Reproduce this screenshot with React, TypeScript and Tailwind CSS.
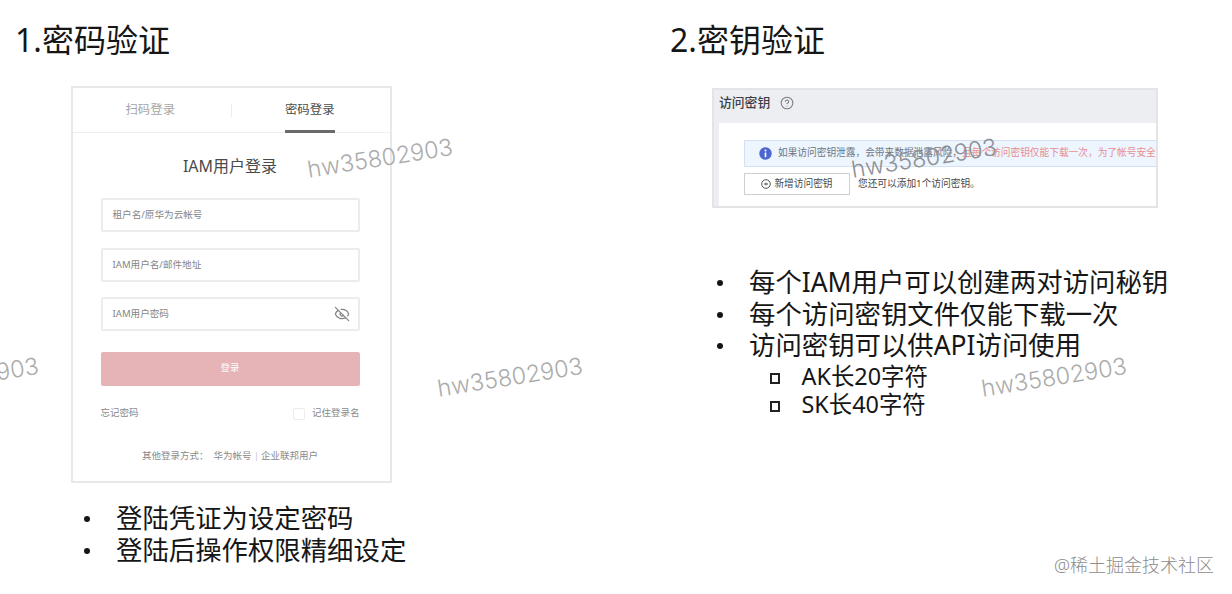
import React from 'react';
import { CircleHelp, EyeOff } from 'lucide-react';

const watermarks = [
  { id: 'a', position: 'left-[380px] top-[157.5px]', color: 'text-[#acacac]' },
  { id: 'b', position: 'left-[924px] top-[157.5px]', color: 'text-[#8d9196]' },
  { id: 'c', position: 'left-[-34px] top-[376.5px]', color: 'text-[#acacac]' },
  { id: 'd', position: 'left-[510px] top-[376.5px]', color: 'text-[#acacac]' },
  { id: 'e', position: 'left-[1054px] top-[376.5px]', color: 'text-[#acacac]' },
];

const passwordNotes = ['登陆凭证为设定密码', '登陆后操作权限精细设定'];
const keyNotes = ['每个IAM用户可以创建两对访问秘钥', '每个访问密钥文件仅能下载一次', '访问密钥可以供API访问使用'];
const keyLengths = ['AK长20字符', 'SK长40字符'];

const BulletList: React.FC<{ items: string[] }> = ({ items }) => (
  <ul className="text-[26.4px] leading-[31.7px] text-[#161616]">
    {items.map((item) => (
      <li key={item} className="flex items-center whitespace-nowrap">
        <span className="w-[6px] h-[6px] rounded-full bg-[#161616] mr-[26px]"></span>
        <span>{item}</span>
      </li>
    ))}
  </ul>
);

const Field: React.FC<{ placeholder: string; children?: React.ReactNode }> = ({ placeholder, children }) => (
  <div className="flex items-center justify-between h-[34px] mb-[15.5px] pl-[10px] pr-[8px] border-2 border-[#ececec] rounded-xs">
    <span className="pt-px text-[9.6px] text-[#858585]">{placeholder}</span>
    {children}
  </div>
);

const LoginCard: React.FC = () => (
  <div className="w-[321px] h-[397px] border-2 border-[#e8e8e8] bg-white">
    <div className="flex items-center h-[45px] border-b border-[#efefef] text-[12.4px]">
      <div className="flex-1 pr-[3px] text-center text-[#a6a6a6]">扫码登录</div>
      <div className="w-px h-[13px] bg-[#ececec]"></div>
      <div className="flex-1 flex justify-center h-[45px] pr-[2px]">
        <span className="flex items-center h-[45px] pt-[3px] border-b-3 border-[#6a6a6a] text-[#4c4c4c]">密码登录</span>
      </div>
    </div>
    <div className="pl-[28px] pr-[30px]">
      <h2 className="h-[65px] pt-[21px] leading-[24px] text-center text-[16px] text-[#4a4a4a]">IAM用户登录</h2>
      <Field placeholder="租户名/原华为云帐号" />
      <Field placeholder="IAM用户名/邮件地址" />
      <Field placeholder="IAM用户密码">
        <EyeOff className="w-[16px] h-[16px] text-[#858585]" strokeWidth={1.9} />
      </Field>
      <button className="block w-full h-[34px] mt-[20.5px] bg-[#e6b3b6] text-white text-[9.5px] rounded-xs">登录</button>
      <div className="flex items-center justify-between h-[20px] mt-[18px] text-[9.5px] text-[#8a8a8a]">
        <span>忘记密码</span>
        <span className="flex items-center gap-[7px]">
          <span className="w-[12px] h-[12px] border border-[#ececec] rounded-xs"></span>
          记住登录名
        </span>
      </div>
      <div className="mt-[22px] leading-[20px] text-center text-[9.5px] text-[#8a8a8a] whitespace-nowrap">
        其他登录方式：<span className="ml-[5px]">华为帐号</span>
        <span className="mx-[2px] text-[#c8c8c8]">|</span>
        <span>企业联邦用户</span>
      </div>
    </div>
  </div>
);

const AccessKeyPanel: React.FC = () => (
  <div className="w-[446px] h-[120px] border-2 border-[#e4e4e6] bg-[#edeef2] pl-[5px] overflow-hidden">
    <div className="flex items-center h-[33px] pb-[7px] text-[12.8px] font-medium text-[#3c3d45]">
      <span>访问密钥</span>
      <CircleHelp className="ml-[10px] w-[14px] h-[14px] text-[#7b7c83]" strokeWidth={1.8} />
    </div>
    <div className="h-[83px] pt-[17px] pl-[25px] bg-white">
      <div className="flex items-center h-[27px] pl-[14px] border-y border-l border-[#d3e1f2] bg-[#edf5fe] text-[9.7px] whitespace-nowrap">
        <svg className="w-[13px] h-[13px] mr-[6px] shrink-0" viewBox="0 0 13 13">
          <circle cx="6.5" cy="6.5" r="6.2" fill="#4e66cf" />
          <circle cx="6.5" cy="3.5" r="1" fill="white" />
          <path d="M6.5 5.5v4.7" stroke="white" strokeWidth="1.6" />
        </svg>
        <span className="text-[#6d7682]">如果访问密钥泄露，会带来数据泄露风险，</span>
        <span className="text-[#e88d90]">且每个访问密钥仅能下载一次，为了帐号安全</span>
      </div>
      <div className="flex items-center mt-[6px] text-[9.7px] text-[#4a4a4a]">
        <button className="flex items-center justify-center w-[106px] h-[22px] border border-[#cfcfcf]">
          <svg className="w-[10px] h-[10px] mr-[3px]" viewBox="0 0 10 10" fill="none" stroke="#555">
            <circle cx="5" cy="5" r="4.3" />
            <path d="M3 5h4M5 3.8v2.4" />
          </svg>
          新增访问密钥
        </button>
        <span className="ml-[8px]">您还可以添加1个访问密钥。</span>
      </div>
    </div>
  </div>
);

const App: React.FC = () => {
  return (
    <div className="relative flex w-[1232px] h-[594px] overflow-hidden bg-white font-['Noto_Sans','Noto_Sans_CJK_SC',sans-serif]">
      <section className="w-[655px] pt-[20px] pl-[15px]">
        <h1 className="text-[32px] leading-[40px] text-[#161616]">1.密码验证</h1>
        <div className="mt-[26px] ml-[55.5px]">
          <LoginCard />
        </div>
        <div className="mt-[20px] ml-[69px]">
          <BulletList items={passwordNotes} />
        </div>
      </section>

      <section className="flex flex-col flex-1 pt-[20px] pl-[15px]">
        <h1 className="text-[32px] leading-[40px] text-[#161616]">2.密钥验证</h1>
        <div className="mt-[28px] ml-[42px]">
          <AccessKeyPanel />
        </div>
        <div className="mt-[59px] ml-[47px]">
          <BulletList items={keyNotes} />
          <ul className="ml-[52.5px] text-[23.4px] leading-[28.3px] text-[#161616]">
            {keyLengths.map((item) => (
              <li key={item} className="flex items-center h-[28.3px] pb-px">
                <span className="w-[10px] h-[11px] mt-[5px] mr-[22px] border-2 border-[#222]"></span>
                <span>{item}</span>
              </li>
            ))}
          </ul>
        </div>
        <div className="mt-auto mb-[16px] pr-[18px] text-right text-[18px] leading-[26px] font-light text-[#8c8c8c]">@稀土掘金技术社区</div>
      </section>

      {/* Diagonal user id stamps over the slide */}
      {watermarks.map((mark) => (
        <span
          key={mark.id}
          className={`absolute ${mark.position} ${mark.color} -translate-x-1/2 -translate-y-1/2 rotate-[-9deg] font-[Inter,sans-serif] font-light text-[23.4px] leading-none pointer-events-none`}
        >
          hw35802903
        </span>
      ))}
    </div>
  );
};

export default App;
